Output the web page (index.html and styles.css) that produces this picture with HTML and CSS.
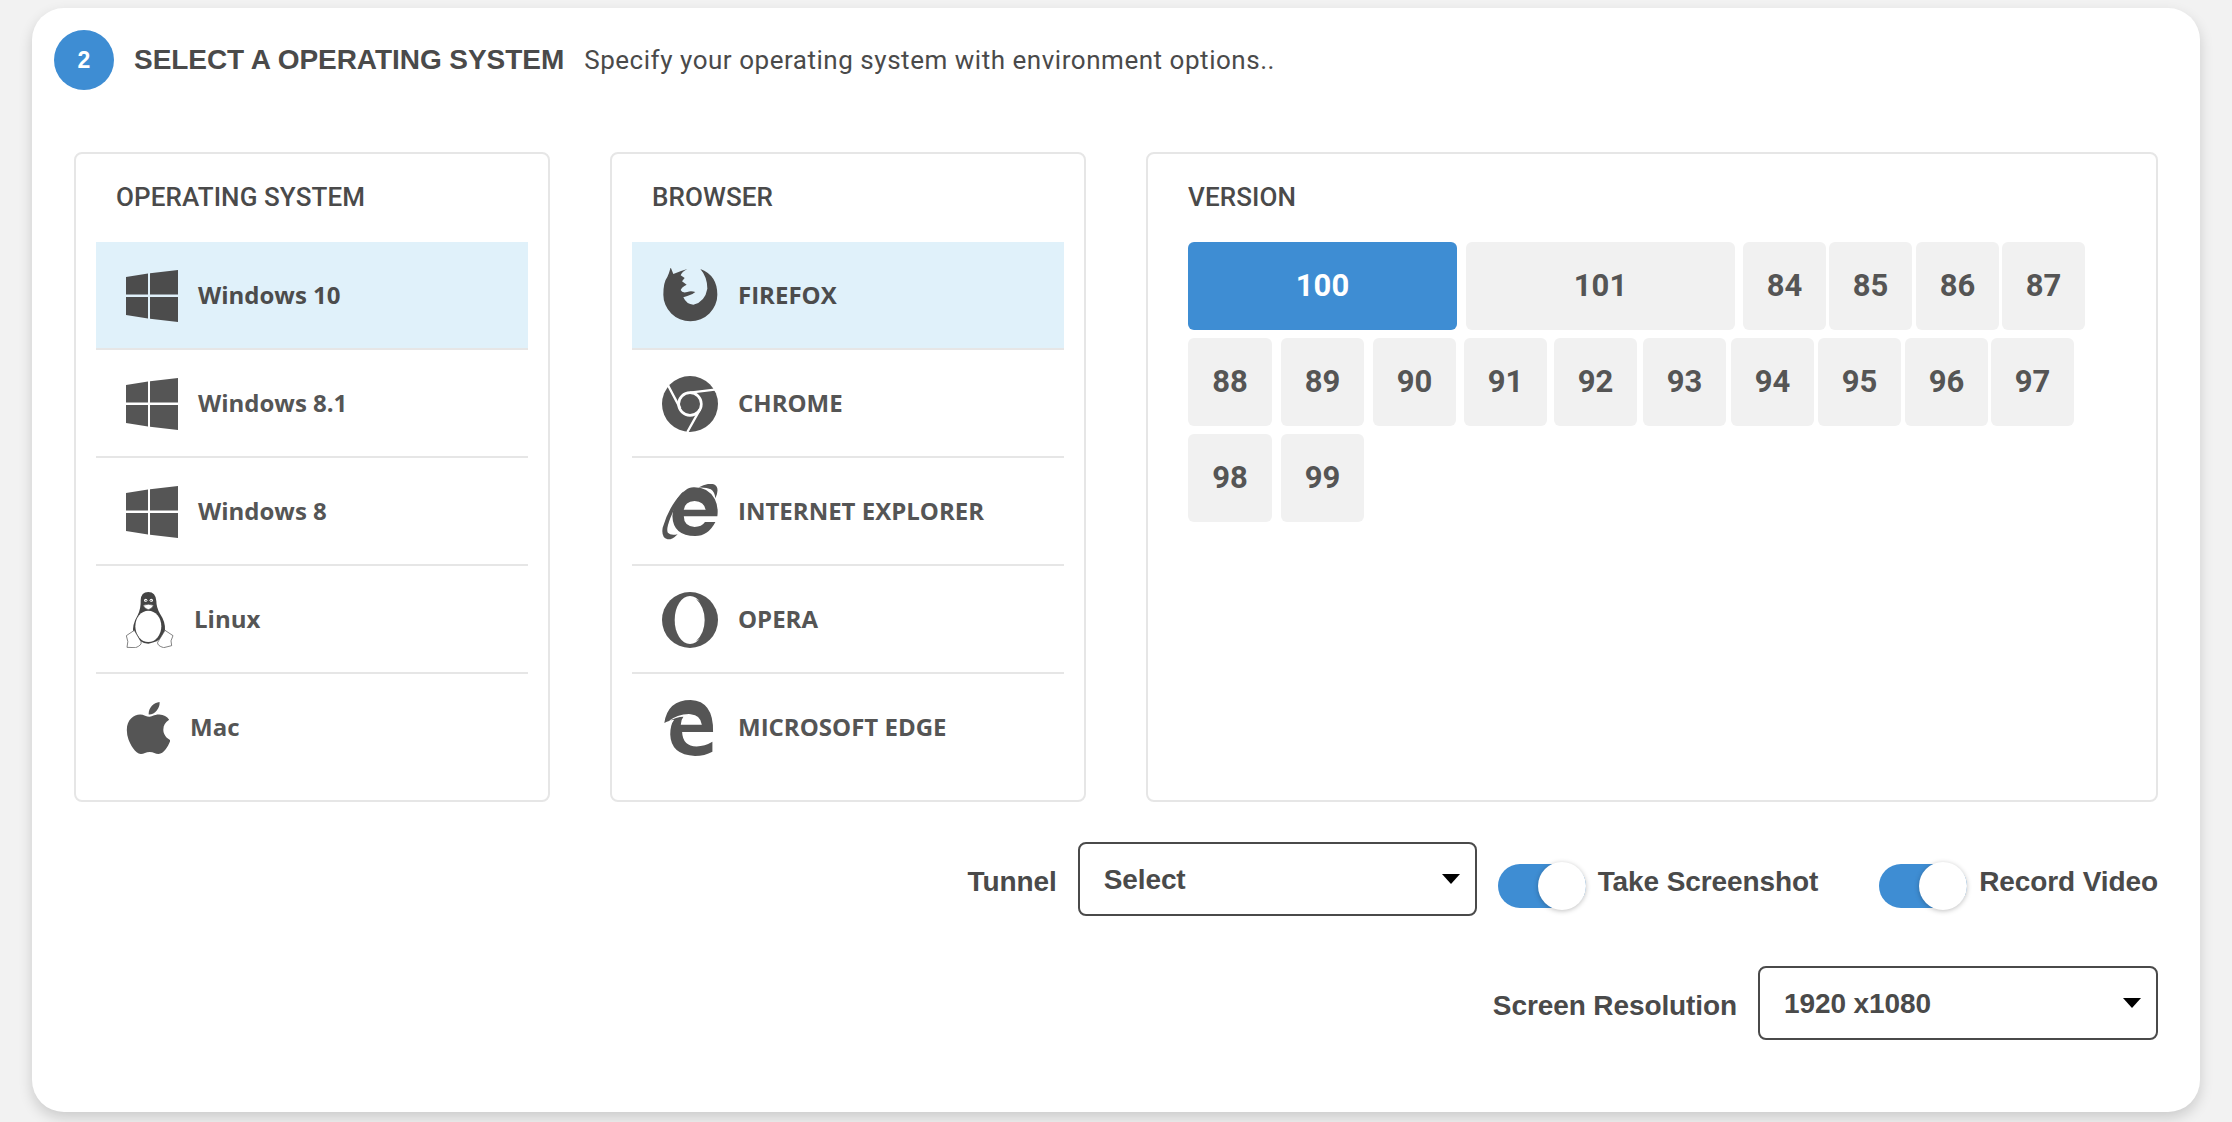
FILE: index.html
```html
<!DOCTYPE html>
<html lang="en">
<head>
    <meta charset="UTF-8">
    <title>Select a operating system</title>
    <link rel="stylesheet" href="styles.css">
</head>
<body>
    <div class="card">
        <div class="step-head">
            <span class="step-num">2</span>
            <h2>SELECT A OPERATING SYSTEM</h2>
            <p>Specify your operating system with environment options..</p>
        </div>

        <div class="panels">
            <div class="panel">
                <h3>OPERATING SYSTEM</h3>
                <ul class="pick-list">
                    <li class="active">
                        <svg class="icon-win" viewBox="0 0 52 52"><path d="M0 7L22 3.6V24.6H0ZM24 3.2L52 0V24.6H24ZM0 27H22V48.4L0 45ZM24 27H52V52L24 48.8Z"/></svg>
                        <span>Windows 10</span>
                    </li>
                    <li>
                        <svg class="icon-win" viewBox="0 0 52 52"><path d="M0 7L22 3.6V24.6H0ZM24 3.2L52 0V24.6H24ZM0 27H22V48.4L0 45ZM24 27H52V52L24 48.8Z"/></svg>
                        <span>Windows 8.1</span>
                    </li>
                    <li>
                        <svg class="icon-win" viewBox="0 0 52 52"><path d="M0 7L22 3.6V24.6H0ZM24 3.2L52 0V24.6H24ZM0 27H22V48.4L0 45ZM24 27H52V52L24 48.8Z"/></svg>
                        <span>Windows 8</span>
                    </li>
                    <li>
                        <svg class="icon-tux" viewBox="33 15 144 168">
                            <path d="M100 15Q122 15 124 42Q124 62 135 80Q152 105 150 130L140 150Q130 165 100 170Q65 165 55 140Q50 115 68 85Q78 65 77 40Q78 15 100 15Z" fill="#444"/>
                            <ellipse cx="100" cy="118" rx="39" ry="47" fill="#fff"/>
                            <circle cx="92" cy="40" r="5" fill="#fff"/>
                            <circle cx="109" cy="40" r="5" fill="#fff"/>
                            <circle cx="93" cy="41" r="2" fill="#333"/>
                            <circle cx="108" cy="41" r="2" fill="#333"/>
                            <path d="M84 55Q100 48 116 55Q108 68 100 68Q92 68 84 55Z" fill="#fff" stroke="#444" stroke-width="2"/>
                            <path class="tux-foot" d="M34 146L58 130L78 164Q82 174 62 182L36 181Q42 164 34 146Z"/>
                            <path class="tux-foot" d="M174 146L150 130L128 166Q126 176 146 182L170 176Q164 162 174 146Z"/>
                        </svg>
                        <span>Linux</span>
                    </li>
                    <li>
                        <svg class="icon-mac" viewBox="4 32 365 448"><path d="M318.7 268.7c-.2-36.7 16.4-64.4 50-84.8-18.8-26.9-47.2-41.7-84.7-44.6-35.5-2.8-74.3 20.7-88.5 20.7-15 0-49.4-19.7-76.4-19.7C63.3 141.2 4 184.8 4 273.5q0 39.3 14.4 81.2c12.8 36.7 59 126.7 107.2 125.2 25.2-.6 43-17.9 75.8-17.9 31.8 0 48.3 17.9 76.4 17.9 48.6-.7 90.4-82.5 102.6-119.3-65.2-30.7-61.7-90-61.7-91.9zm-56.6-164.2c27.3-32.4 24.8-61.9 24-72.5-24.1 1.4-52 16.4-67.9 34.9-17.5 19.8-27.8 44.3-25.6 71.9 26.1 2 49.9-11.4 69.5-34.3z"/></svg>
                        <span>Mac</span>
                    </li>
                </ul>
            </div>

            <div class="panel">
                <h3>BROWSER</h3>
                <ul class="pick-list">
                    <li class="active">
                        <svg class="icon-browser" viewBox="36 28 168 168"><path d="M62 26L70 46Q88 38 112 31Q95 40 92 50L104 58L96 68L110 78Q95 85 92 94Q96 104 112 100Q122 96 136 100Q128 108 112 112L100 116Q110 138 130 138Q165 130 172 90Q172 55 151 31Q202 50 202 108A81 80 0 0 1 40 108Q40 70 52 55Q58 42 62 26Z"/></svg>
                        <span>FIREFOX</span>
                    </li>
                    <li>
                        <svg class="icon-browser" viewBox="36 28 168 168">
                            <circle cx="120" cy="112" r="84"/>
                            <circle cx="120" cy="112" r="34" class="cut-ring"/>
                            <path class="cut-line" d="M52 52L91 126M120 78L200 68M150 128L112 196"/>
                        </svg>
                        <span>CHROME</span>
                    </li>
                    <li>
                        <svg class="icon-browser" viewBox="28 26 172 172">
                            <path fill-rule="evenodd" d="M102 44Q64 68 60 125Q62 185 130 186Q170 186 192 143L160 143Q150 158 128 158Q95 155 95 125L198 125Q202 95 190 72Q170 35 125 36Q110 36 102 44ZM95 105Q98 80 128 78Q158 80 162 105Z"/>
                            <path d="M140 37Q170 20 190 28Q206 38 192 70Q190 50 178 42Q165 36 140 37Z"/>
                            <path d="M94 48Q50 92 30 160Q25 190 45 196Q60 197 76 180Q55 185 46 176Q40 165 54 130Q70 90 94 48Z"/>
                        </svg>
                        <span>INTERNET EXPLORER</span>
                    </li>
                    <li>
                        <svg class="icon-browser" viewBox="156 180 168 168">
                            <circle cx="240" cy="264" r="84"/>
                            <ellipse cx="240" cy="264" rx="46" ry="72" class="cut-fill"/>
                            <path d="M258 200Q284 225 284 264Q284 303 258 328L300 300V228Z"/>
                        </svg>
                        <span>OPERA</span>
                    </li>
                    <li>
                        <svg class="icon-browser" viewBox="36 25 168 170"><path fill-rule="evenodd" d="M42 95Q52 25 122 25Q192 28 190 122L96 122Q98 165 140 166Q165 166 188 152L188 182Q165 195 135 195Q62 192 60 130Q60 100 72 85Q58 85 42 95ZM92 100L156 100Q152 70 122 68Q85 66 50 92Q80 76 100 76Q92 86 92 100Z"/></svg>
                        <span>MICROSOFT EDGE</span>
                    </li>
                </ul>
            </div>

            <div class="panel panel-version">
                <h3>VERSION</h3>
                <div class="version-row">
                    <button class="version wide selected">100</button>
                    <button class="version wide ml-9">101</button>
                    <button class="version ml-8">84</button>
                    <button class="version ml-3">85</button>
                    <button class="version ml-4">86</button>
                    <button class="version ml-3">87</button>
                </div>
                <div class="version-row">
                    <button class="version first">88</button>
                    <button class="version ml-9">89</button>
                    <button class="version ml-9">90</button>
                    <button class="version ml-8">91</button>
                    <button class="version ml-7">92</button>
                    <button class="version ml-6">93</button>
                    <button class="version ml-5">94</button>
                    <button class="version ml-4">95</button>
                    <button class="version ml-4">96</button>
                    <button class="version ml-3">97</button>
                </div>
                <div class="version-row">
                    <button class="version first">98</button>
                    <button class="version ml-9">99</button>
                </div>
            </div>
        </div>

        <div class="options">
            <label class="field-label">Tunnel</label>
            <div class="select-box">
                <select><option>Select</option></select>
            </div>
            <span class="toggle"></span>
            <span class="toggle-label">Take Screenshot</span>
            <span class="toggle toggle-second"></span>
            <span class="toggle-label">Record Video</span>
        </div>
        <div class="options options-res">
            <label class="field-label">Screen Resolution</label>
            <div class="select-box">
                <select><option>1920 x1080</option></select>
            </div>
        </div>
    </div>
</body>
</html>
```

FILE: styles.css
```css
* {
    box-sizing: border-box;
}
html, body {
    height: 1122px;
    overflow: hidden;
}
body {
    margin: 0;
    padding: 8px 32px 0;
    background-color: #f2f2f2;
    font-family: "Liberation Sans", Arial, sans-serif;
    color: #4a4a4a;
}
.card {
    height: 1104px;
    padding: 22px 42px 0 22px;
    background-color: #fff;
    border-radius: 32px;
    box-shadow: 0 6px 14px rgba(0, 0, 0, 0.16);
}

/* header */
.step-head {
    display: flex;
    align-items: center;
    height: 60px;
}
.step-num {
    width: 60px;
    height: 60px;
    border-radius: 50%;
    background-color: #3e8dd3;
    color: #fff;
    font-weight: bold;
    font-size: 23px;
    line-height: 60px;
    text-align: center;
}
.step-head h2 {
    margin: 0 0 0 20px;
    font-size: 28px;
    letter-spacing: -0.05px;
    white-space: nowrap;
}
.step-head p {
    margin: 0 0 1px 20px;
    font-family: Roboto, sans-serif;
    font-size: 26px;
    letter-spacing: 0.53px;
    white-space: nowrap;
}

/* panels */
.panels {
    display: flex;
    gap: 60px;
    margin: 62px 0 0 20px;
}
.panel {
    width: 476px;
    height: 650px;
    padding: 0 20px;
    border: 2px solid #e6e6e6;
    border-radius: 8px;
}
.panel-version {
    width: 1012px;
    padding: 0 40px;
}
.panel h3 {
    height: 88px;
    margin: 0;
    padding: 0 0 3px 20px;
    display: flex;
    align-items: center;
    font-family: Roboto, sans-serif;
    font-weight: 500;
    font-size: 26px;
    letter-spacing: 0.1px;
}
.panel-version h3 {
    padding-left: 0;
}
.pick-list {
    margin: 0;
    padding: 0;
    list-style: none;
}
.pick-list li {
    height: 108px;
    padding-left: 30px;
    display: flex;
    align-items: center;
    border-bottom: 2px solid #e6e6e6;
    font-family: "Open Sans", sans-serif;
    font-weight: 700;
    font-size: 24px;
    color: #555;
}
.pick-list li:last-child {
    border-bottom-color: transparent;
}
.pick-list li.active {
    background-color: #e0f1fa;
    color: #4c4c4c;
}
.pick-list li span {
    margin-bottom: 2px;
}
.pick-list svg {
    flex: none;
    margin-top: 2px;
    fill: currentColor;
}
.icon-win {
    width: 52px;
    height: 52px;
    margin-right: 20px;
}
.icon-tux {
    width: 48px;
    height: 56px;
    margin-right: 20px;
}
.icon-mac {
    width: 44px;
    height: 52px;
    margin-right: 20px;
}
.icon-browser {
    width: 56px;
    height: 56px;
    margin-right: 20px;
}
.cut-ring {
    fill: none;
    stroke: #fff;
    stroke-width: 8;
}
.cut-line {
    fill: none;
    stroke: #fff;
    stroke-width: 7;
}
.cut-fill {
    fill: #fff;
}
.tux-foot {
    fill: #fff;
    stroke: #444;
    stroke-width: 2;
}

/* versions */
.version-row {
    display: flex;
    margin-bottom: 8px;
}
.version {
    width: 83px;
    height: 88px;
    padding: 0 0 2px;
    border: none;
    border-radius: 6px;
    background-color: #f1f1f1;
    font-family: Roboto, sans-serif;
    font-weight: 700;
    font-size: 31px;
    color: #555;
}
.version.first {
    width: 84px;
}
.version.wide {
    width: 269px;
}
.version.selected {
    background-color: #3e8dd3;
    color: #fff;
}
.ml-3 { margin-left: 3px; }
.ml-4 { margin-left: 4px; }
.ml-5 { margin-left: 5px; }
.ml-6 { margin-left: 6px; }
.ml-7 { margin-left: 7px; }
.ml-8 { margin-left: 8px; }
.ml-9 { margin-left: 9px; }

/* tunnel, toggles, resolution */
.options {
    display: flex;
    justify-content: flex-end;
    align-items: center;
    margin-top: 40px;
    font-weight: bold;
    font-size: 28px;
    letter-spacing: -0.1px;
}
.options-res {
    margin-top: 50px;
}
.field-label {
    margin: 5px 21px 0 0;
}
.select-box {
    position: relative;
    width: 399px;
    height: 74px;
}
.options-res .select-box {
    width: 400px;
}
.select-box::after {
    content: "";
    position: absolute;
    top: 32px;
    right: 17px;
    border-top: 10px solid #000;
    border-left: 9px solid transparent;
    border-right: 9px solid transparent;
}
.select-box select {
    width: 100%;
    height: 100%;
    padding: 0 24px;
    border: 2px solid #4a4a4a;
    border-radius: 8px;
    background-color: #fff;
    appearance: none;
    font-family: "Liberation Sans", Arial, sans-serif;
    font-weight: bold;
    font-size: 28px;
    letter-spacing: -0.1px;
    color: #4a4a4a;
}
.toggle {
    position: relative;
    width: 88px;
    height: 44px;
    margin: 14px 12px 0 21px;
    border-radius: 22px;
    background-color: #3e8dd3;
}
.toggle::after {
    content: "";
    position: absolute;
    top: -2px;
    left: 40px;
    width: 48px;
    height: 48px;
    border-radius: 50%;
    background-color: #fff;
    box-shadow: 0 1px 5px rgba(0, 0, 0, 0.25);
}
.toggle-label {
    margin-top: 5px;
}
.toggle-second {
    margin-left: 61px;
}
```
